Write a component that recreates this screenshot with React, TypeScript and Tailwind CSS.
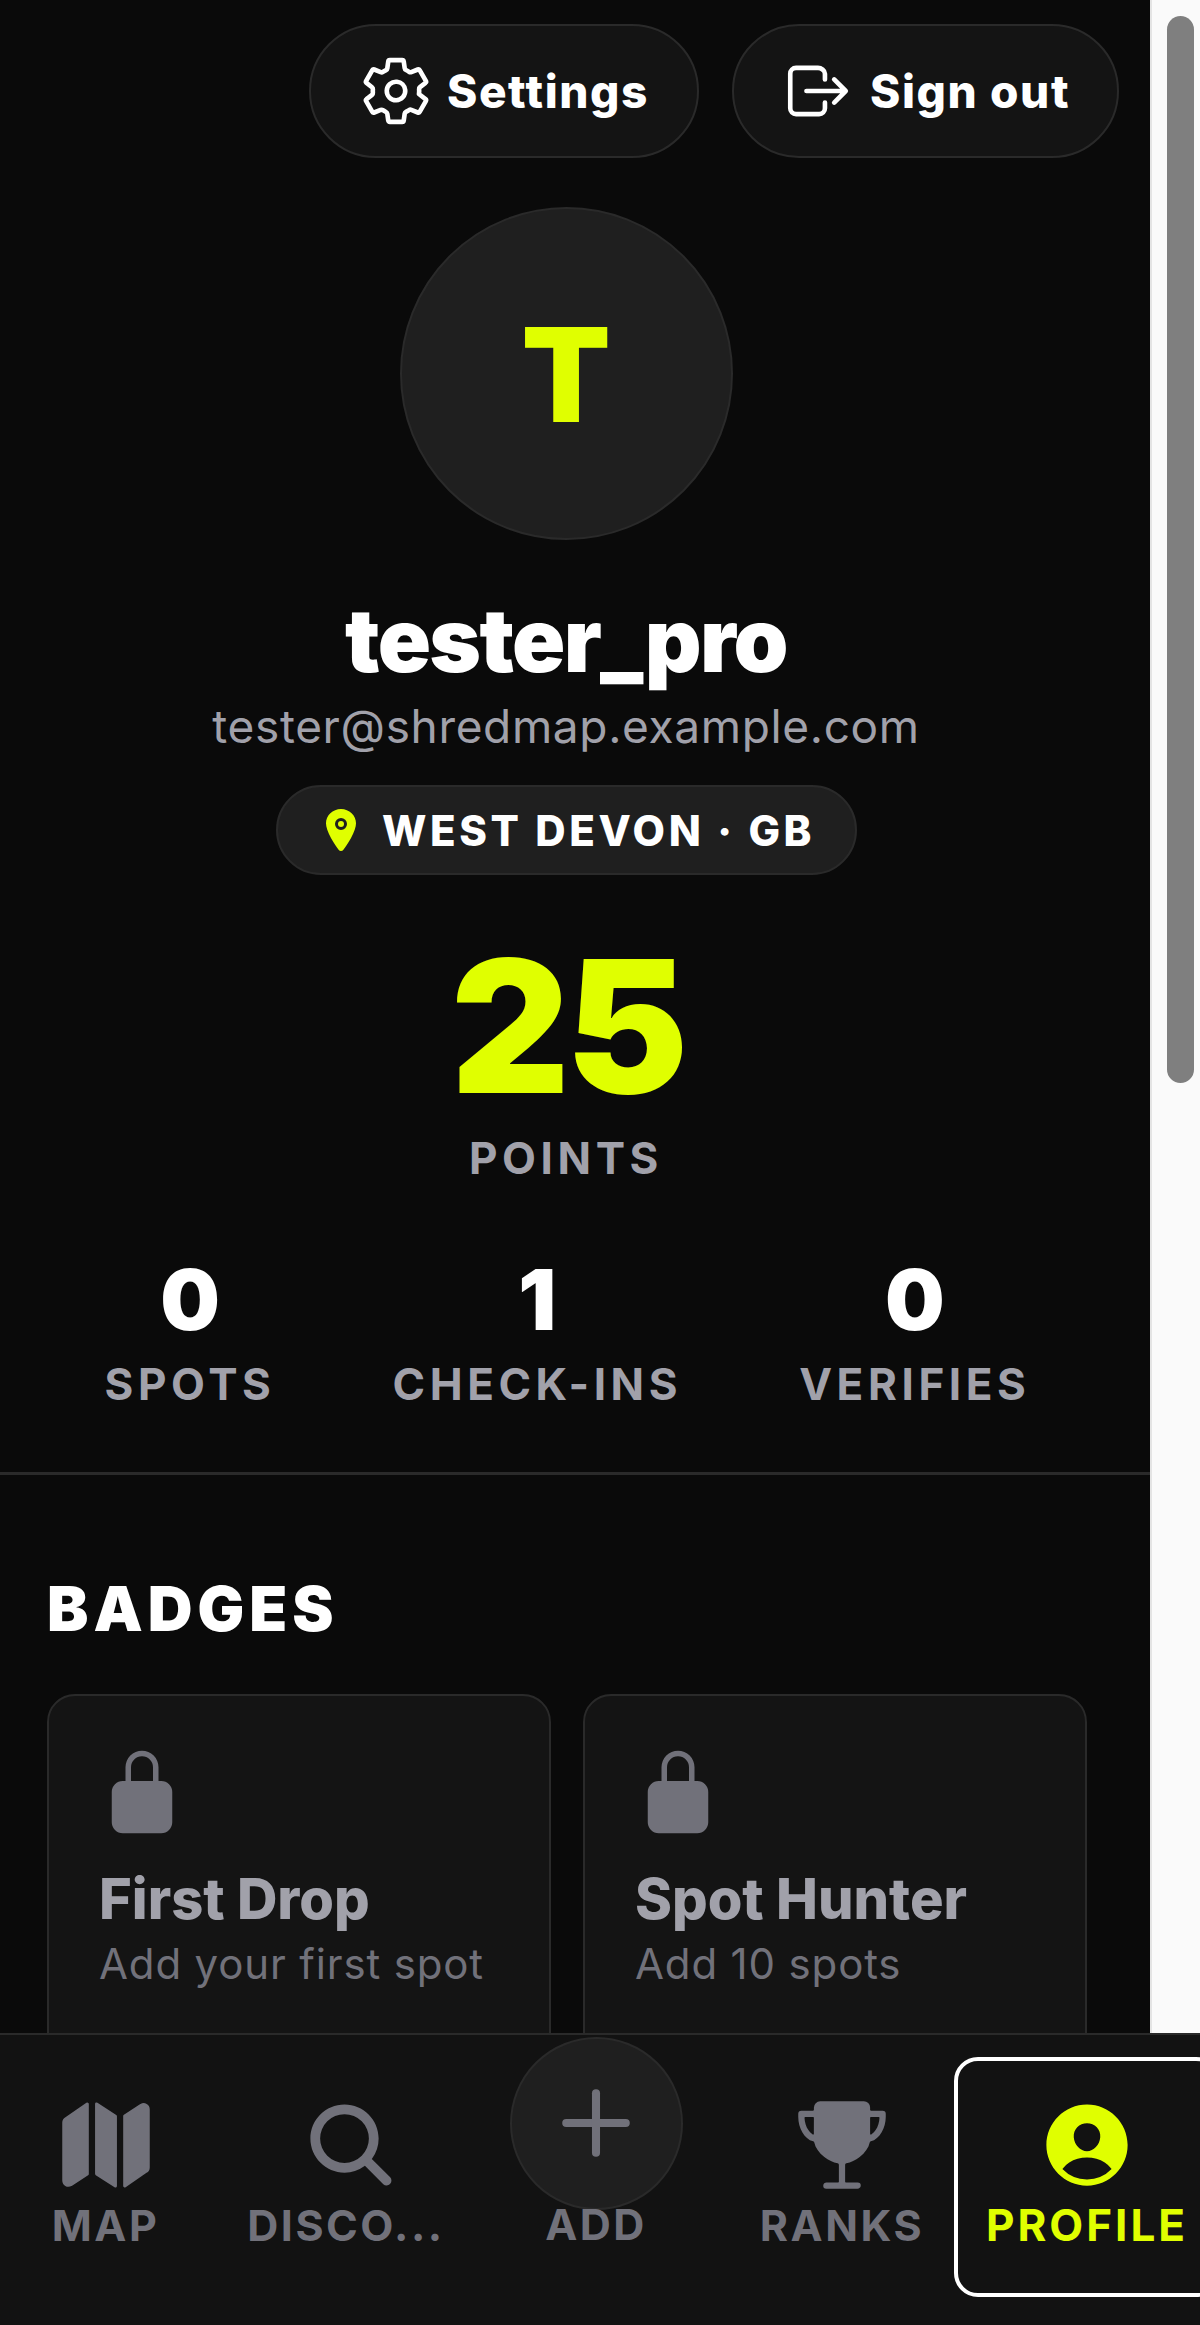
import React from 'react';
import { Plus } from 'lucide-react';
import { IoLocation, IoLockClosed, IoLogOutOutline, IoMap, IoPersonCircle, IoSearch, IoSettingsOutline, IoTrophy } from 'react-icons/io5';

const stats = [
  { value: '0', label: 'SPOTS' },
  { value: '1', label: 'CHECK-INS' },
  { value: '0', label: 'VERIFIES' },
];

const badges = [
  { title: 'First Drop', desc: 'Add your first spot' },
  { title: 'Spot Hunter', desc: 'Add 10 spots' },
];

const App: React.FC = () => {
  return (
    <div className="flex h-screen w-[1200px] flex-col overflow-hidden bg-[#0a0a0a] font-['Inter',sans-serif] text-white">
      <div className="flex h-[2033px] shrink-0 overflow-hidden">
        <main className="w-[1150px] shrink-0">
          <div className="w-[1132px]">
            <div className="flex justify-end gap-[33px] pt-6 pr-[13px]">
              <button className="flex h-[134px] w-[390px] items-center justify-center gap-[14px] rounded-full border-2 border-[#2a2a2a] bg-[#141414] text-[46px] font-extrabold tracking-[1.6px]">
                <IoSettingsOutline className="h-[74px] w-[74px]" />
                <span>Settings</span>
              </button>
              <button className="flex h-[134px] w-[387px] items-center justify-center gap-[15px] rounded-full border-2 border-[#2a2a2a] bg-[#141414] text-[46px] font-extrabold tracking-[1.6px]">
                <IoLogOutOutline className="h-[74px] w-[74px]" />
                <span>Sign out</span>
              </button>
            </div>

            <div className="mt-[49px] flex flex-col items-center">
              <div className="flex h-[333px] w-[333px] items-center justify-center rounded-full border-2 border-[#2a2a2a] bg-[#1f1f1f] pt-[2px] text-[130px] leading-none font-black text-[#e0ff00]">
                T
              </div>
              <h1 className="mt-[52px] text-[88px] leading-[96px] font-black tracking-[-1.7px]">tester_pro</h1>
              <p className="mt-[8px] text-[46px] leading-[60px] tracking-[0.65px] text-[#a1a1aa]">tester@shredmap.example.com</p>
              <div className="mt-[29px] flex h-[90px] w-[581px] items-center justify-center gap-[17px] rounded-full border-2 border-[#2a2a2a] bg-[#1f1f1f]">
                <IoLocation className="h-[48px] w-[48px] text-[#e0ff00]" />
                <span className="text-[42px] font-extrabold tracking-[3.6px]">WEST DEVON · GB</span>
              </div>
              <div className="mt-[51px] pl-[3px] text-[184px] leading-[200px] font-black tracking-[-4px] text-[#e0ff00]">25</div>
              <div className="mt-[7px] text-[44px] leading-[50px] font-bold tracking-[4.6px] text-[#a1a1aa]">POINTS</div>
            </div>

            <div className="mt-[69px] flex justify-center gap-[117px] pl-[3px]">
              {stats.map((s) => (
                <div key={s.label} className="flex flex-col items-center">
                  <div className="text-[84px] leading-[96px] font-black">{s.value}</div>
                  <div className="mt-[11px] text-[44px] leading-[50px] font-bold tracking-[4.6px] text-[#a1a1aa]">{s.label}</div>
                </div>
              ))}
            </div>
          </div>

          <div className="mt-[63px] border-t-[3px] border-[#2a2a2a] px-[47px] pt-[102px]">
            <h2 className="text-[62px] leading-[64px] font-black tracking-[5px]">BADGES</h2>
            <div className="mt-[53px] grid w-[1040px] grid-cols-2 gap-8">
              {badges.map((b) => (
                <div key={b.title} className="h-[400px] rounded-[28px] border-2 border-[#2a2a2a] bg-[#141414] px-[50px] pt-[52px]">
                  <IoLockClosed className="-ml-[1px] h-[88px] w-[88px] text-[#71717a]" />
                  <div className="mt-[33px] text-[56px] leading-[60px] font-extrabold text-[#a1a1aa]">{b.title}</div>
                  <div className="mt-[8px] text-[42px] leading-[54px] tracking-[0.85px] text-[#71717a]">{b.desc}</div>
                </div>
              ))}
            </div>
          </div>
        </main>
        <div className="relative w-[50px] shrink-0 border-l-2 border-[#e4e4e4] bg-[#fafafa]">
          <div className="absolute top-4 left-[15px] h-[1067px] w-[27px] rounded-full bg-[#7f7f7f]" />
        </div>
      </div>

      <nav className="relative flex h-[292px] shrink-0 overflow-hidden border-t-2 border-[#2a2a2a] bg-[#121212] text-[43px] font-bold tracking-[2.5px] text-[#71717a]">
        <div className="flex w-[208px] shrink-0 flex-col items-center pt-[60px] pl-[3px]">
          <IoMap className="h-[100px] w-[100px]" />
          <span className="mt-[4px] leading-[52px]">MAP</span>
        </div>
        <div className="flex w-[274px] shrink-0 flex-col items-center pt-[60px] pl-[2px]">
          <IoSearch className="ml-[10px] h-[100px] w-[100px]" />
          <span className="mt-[4px] leading-[52px]">DISCO...</span>
        </div>
        <div className="flex w-[228px] shrink-0 flex-col items-center">
          <div className="mt-[2px] flex h-[173px] w-[173px] items-center justify-center rounded-full border-2 border-[#2a2a2a] bg-[#1f1f1f]">
            <Plus className="-mt-[2px] h-[102px] w-[102px]" strokeWidth={1.9} />
          </div>
          <span className="mt-[-12px] leading-[52px]">ADD</span>
        </div>
        <div className="flex w-[244px] shrink-0 flex-col items-center pt-[60px] pl-[20px]">
          <IoTrophy className="h-[100px] w-[100px]" />
          <span className="mt-[4px] leading-[52px]">RANKS</span>
        </div>
        <div className="mt-[22px] flex h-[240px] w-[266px] shrink-0 flex-col items-center rounded-[24px] border-4 border-white pt-[34px] text-[44px] tracking-[3px] text-[#e0ff00]">
          <IoPersonCircle className="h-[100px] w-[100px]" />
          <span className="mt-[4px] leading-[52px]">PROFILE</span>
        </div>
      </nav>
    </div>
  );
};

export default App;
